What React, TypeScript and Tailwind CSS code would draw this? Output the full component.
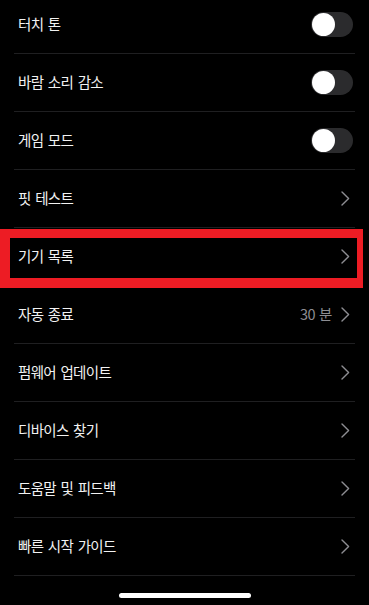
import React from "react";

type Item = { label: string; kind: "toggle" | "chevron"; value?: string; highlight?: boolean };

const items: Item[] = [
  { label: "터치 톤", kind: "toggle" },
  { label: "바람 소리 감소", kind: "toggle" },
  { label: "게임 모드", kind: "toggle" },
  { label: "핏 테스트", kind: "chevron" },
  { label: "기기 목록", kind: "chevron", highlight: true },
  { label: "자동 종료", kind: "chevron", value: "30 분" },
  { label: "펌웨어 업데이트", kind: "chevron" },
  { label: "디바이스 찾기", kind: "chevron" },
  { label: "도움말 및 피드백", kind: "chevron" },
  { label: "빠른 시작 가이드", kind: "chevron" },
];

function Chevron() {
  return (
    <svg width="9" height="15" viewBox="0 0 9 15" fill="none">
      <path d="M1 1 L7.6 7.5 L1 14" stroke="#8d8d92" strokeWidth="1.4" strokeLinecap="round" strokeLinejoin="round" />
    </svg>
  );
}

function Toggle() {
  return (
    <div className="w-[42px] h-[25px] rounded-full bg-[#2b2b2d] p-[1px] flex items-center">
      <div className="w-[23px] h-[23px] rounded-full bg-white" />
    </div>
  );
}

export default function App() {
  return (
    <div
      className="w-[369px] h-[605px] bg-black overflow-hidden flex flex-col"
      style={{ fontFamily: '"Noto Sans CJK KR", "Noto Sans", sans-serif' }}
    >
      <div className="-mt-[4px] flex flex-col">
        {items.map((it, i) => (
          <div key={i} className="relative px-[14px]">
            <div className="h-[58px] border-b border-[#1f1f21] flex items-center justify-between pl-[4px]">
              <span className="text-[14.5px] text-[#f2f2f2] leading-none tracking-[-0.7px] [word-spacing:2px]">{it.label}</span>
              {it.kind === "toggle" ? (
                <div className="pr-[2px]">
                  <Toggle />
                </div>
              ) : (
                <div className="flex items-center gap-[9px] pr-[5px]">
                  {it.value && (
                    <span className="text-[14.5px] text-[#8d8d92] leading-none tracking-[-0.4px] [word-spacing:1px]">{it.value}</span>
                  )}
                  <Chevron />
                </div>
              )}
            </div>
            {it.highlight && (
              <div className="pointer-events-none absolute left-0 top-[1px] w-[363px] h-[59px] border-[#ed1c24] border-t-[9px] border-b-[10px] border-l-[10px] border-r-[6px]" />
            )}
          </div>
        ))}
      </div>
      <div className="flex-1 flex items-end justify-center pb-[7px]">
        <div className="w-[132px] h-[5px] rounded-full bg-white" />
      </div>
    </div>
  );
}
